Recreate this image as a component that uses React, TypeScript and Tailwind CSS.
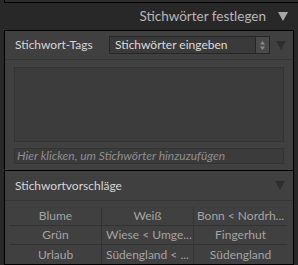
const font = { fontFamily: 'Lato, "Noto Sans", sans-serif' };

const Triangle = ({ color }: { color: string }) => (
  <svg width="10" height="9" viewBox="0 0 10 9">
    <polygon points="0,0 10,0 5,9" fill={color} />
  </svg>
);

const suggestions = [
  ["Blume", "Weiß", "Bonn < Nordrh..."],
  ["Grün", "Wiese < Umge...", "Fingerhut"],
  ["Urlaub", "Südengland < ...", "Südengland"],
];

const App = () => {
  return (
    <div
      className="w-[298px] h-[265px] bg-[#282828] overflow-hidden flex flex-col"
      style={font}
    >
      <div className="h-[3px] ml-[4px] border-l border-b border-black bg-[#2c2c2c]" />

      <div className="h-[27px] flex items-center justify-end gap-[12px] pr-[10px]">
        <span className="text-[13.5px] text-[#b8b8b8] leading-none">Stichwörter festlegen</span>
        <Triangle color="#a8a8a8" />
      </div>

      <div className="ml-[4px] w-[290px] flex-1 border border-black bg-[#404040] flex flex-col">
        <div className="h-[29px] flex items-center pl-[10px] border-b border-[#363636]">
          <span className="w-[94px] text-[12px] text-[#d6d6d6] whitespace-nowrap">Stichwort-Tags</span>
          <div className="w-[161px] h-[18px] bg-[#3a3a3a] border border-[#262626] flex items-center">
            <span className="flex-1 pl-[5px] text-[12px] text-[#dcdcdc] leading-none whitespace-nowrap">Stichwörter eingeben</span>
            <div className="w-[14px] h-full border-l border-[#262626] bg-[#4a4a4a] flex items-center justify-center">
              <svg width="7" height="11" viewBox="0 0 7 11">
                <polygon points="3.5,1 6,4.5 1,4.5" fill="#8a8a8a" />
                <polygon points="3.5,10 6,6.5 1,6.5" fill="#8a8a8a" />
              </svg>
            </div>
          </div>
          <div className="ml-[6px]">
            <Triangle color="#2e2e2e" />
          </div>
        </div>

        <div className="px-[9px] pt-[7px]">
          <div className="h-[75px] bg-[#3c3c3c] border border-[#333333]" />
          <div className="mt-[6px] h-[16px] bg-[#3b3b3b] border border-[#333333] flex items-center pl-[2px]">
            <span className="text-[12px] italic text-[#8e8e8e] leading-none whitespace-nowrap">
              Hier klicken, um Stichwörter hinzuzufügen
            </span>
          </div>
        </div>

        <div className="mt-[6px] border-t border-black h-[31px] flex items-center justify-between pl-[10px] pr-[8px] border-b border-b-[#363636]">
          <span className="text-[12px] text-[#d6d6d6]">Stichwortvorschläge</span>
          <Triangle color="#2e2e2e" />
        </div>

        <div className="mt-[6px] ml-[5px] w-[277px] grid grid-cols-[92px_92px_93px]">
          {suggestions.map((row, r) =>
            row.map((cell, c) => (
              <div
                key={`${r}-${c}`}
                className={`h-[19px] flex items-center text-[12px] text-[#a4a4a4] leading-none whitespace-nowrap overflow-hidden ${
                  c < 2 ? "border-r border-[#333333]" : ""
                } ${r < 2 ? "border-b border-[#333333]" : ""} ${
                  c === 1 && r > 0 ? "justify-start pl-[4px]" : "justify-center"
                }`}
              >
                {cell}
              </div>
            ))
          )}
        </div>
      </div>
    </div>
  );
};

export default App;
